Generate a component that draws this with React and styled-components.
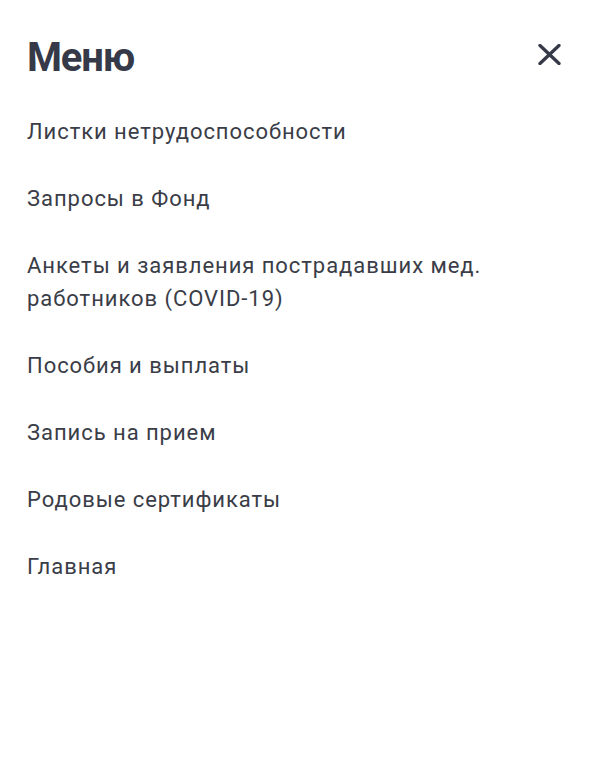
import React from "react";
import styled, { createGlobalStyle } from "styled-components";

const GlobalStyle = createGlobalStyle`
  body {
    margin: 0;
    background: #ffffff;
    font-family: Roboto, "Liberation Sans", sans-serif;
  }
`;

const Panel = styled.div`
  padding: 30px 27px 0 27px;
  color: #353948;
`;

const Header = styled.div`
  display: flex;
  align-items: center;
  justify-content: space-between;
  height: 52px;
`;

const Title = styled.h1`
  margin: 2px 0 0;
  font-size: 40px;
  font-weight: 700;
  letter-spacing: -1.2px;
  color: #353948;
`;

const CloseButton = styled.button`
  border: 0;
  background: none;
  padding: 0;
  margin: 0 12px 4px 0;
  width: 24px;
  height: 24px;
  display: flex;
  align-items: center;
  justify-content: center;
  cursor: pointer;
  color: #353948;
`;

const Nav = styled.nav`
  display: flex;
  flex-direction: column;
  gap: 34px;
  margin-top: 33px;
`;

const Item = styled.a`
  font-size: 22px;
  line-height: 33px;
  letter-spacing: 0.95px;
  color: #3a3d47;
  text-decoration: none;
  max-width: 470px;
`;

const items = [
  "Листки нетрудоспособности",
  "Запросы в Фонд",
  "Анкеты и заявления пострадавших мед. работников (COVID-19)",
  "Пособия и выплаты",
  "Запись на прием",
  "Родовые сертификаты",
  "Главная",
];

export default function App() {
  return (
    <>
      <GlobalStyle />
      <Panel>
        <Header>
          <Title>Меню</Title>
          <CloseButton aria-label="Закрыть">
            <svg width="23" height="21" viewBox="0 0 23 21">
              <path d="M2 1.5 L21 19.5 M21 1.5 L2 19.5" stroke="currentColor" strokeWidth="3.3" strokeLinecap="round" />
            </svg>
          </CloseButton>
        </Header>
        <Nav>
          {items.map((t) => (
            <Item key={t} href="#">{t}</Item>
          ))}
        </Nav>
      </Panel>
    </>
  );
}
